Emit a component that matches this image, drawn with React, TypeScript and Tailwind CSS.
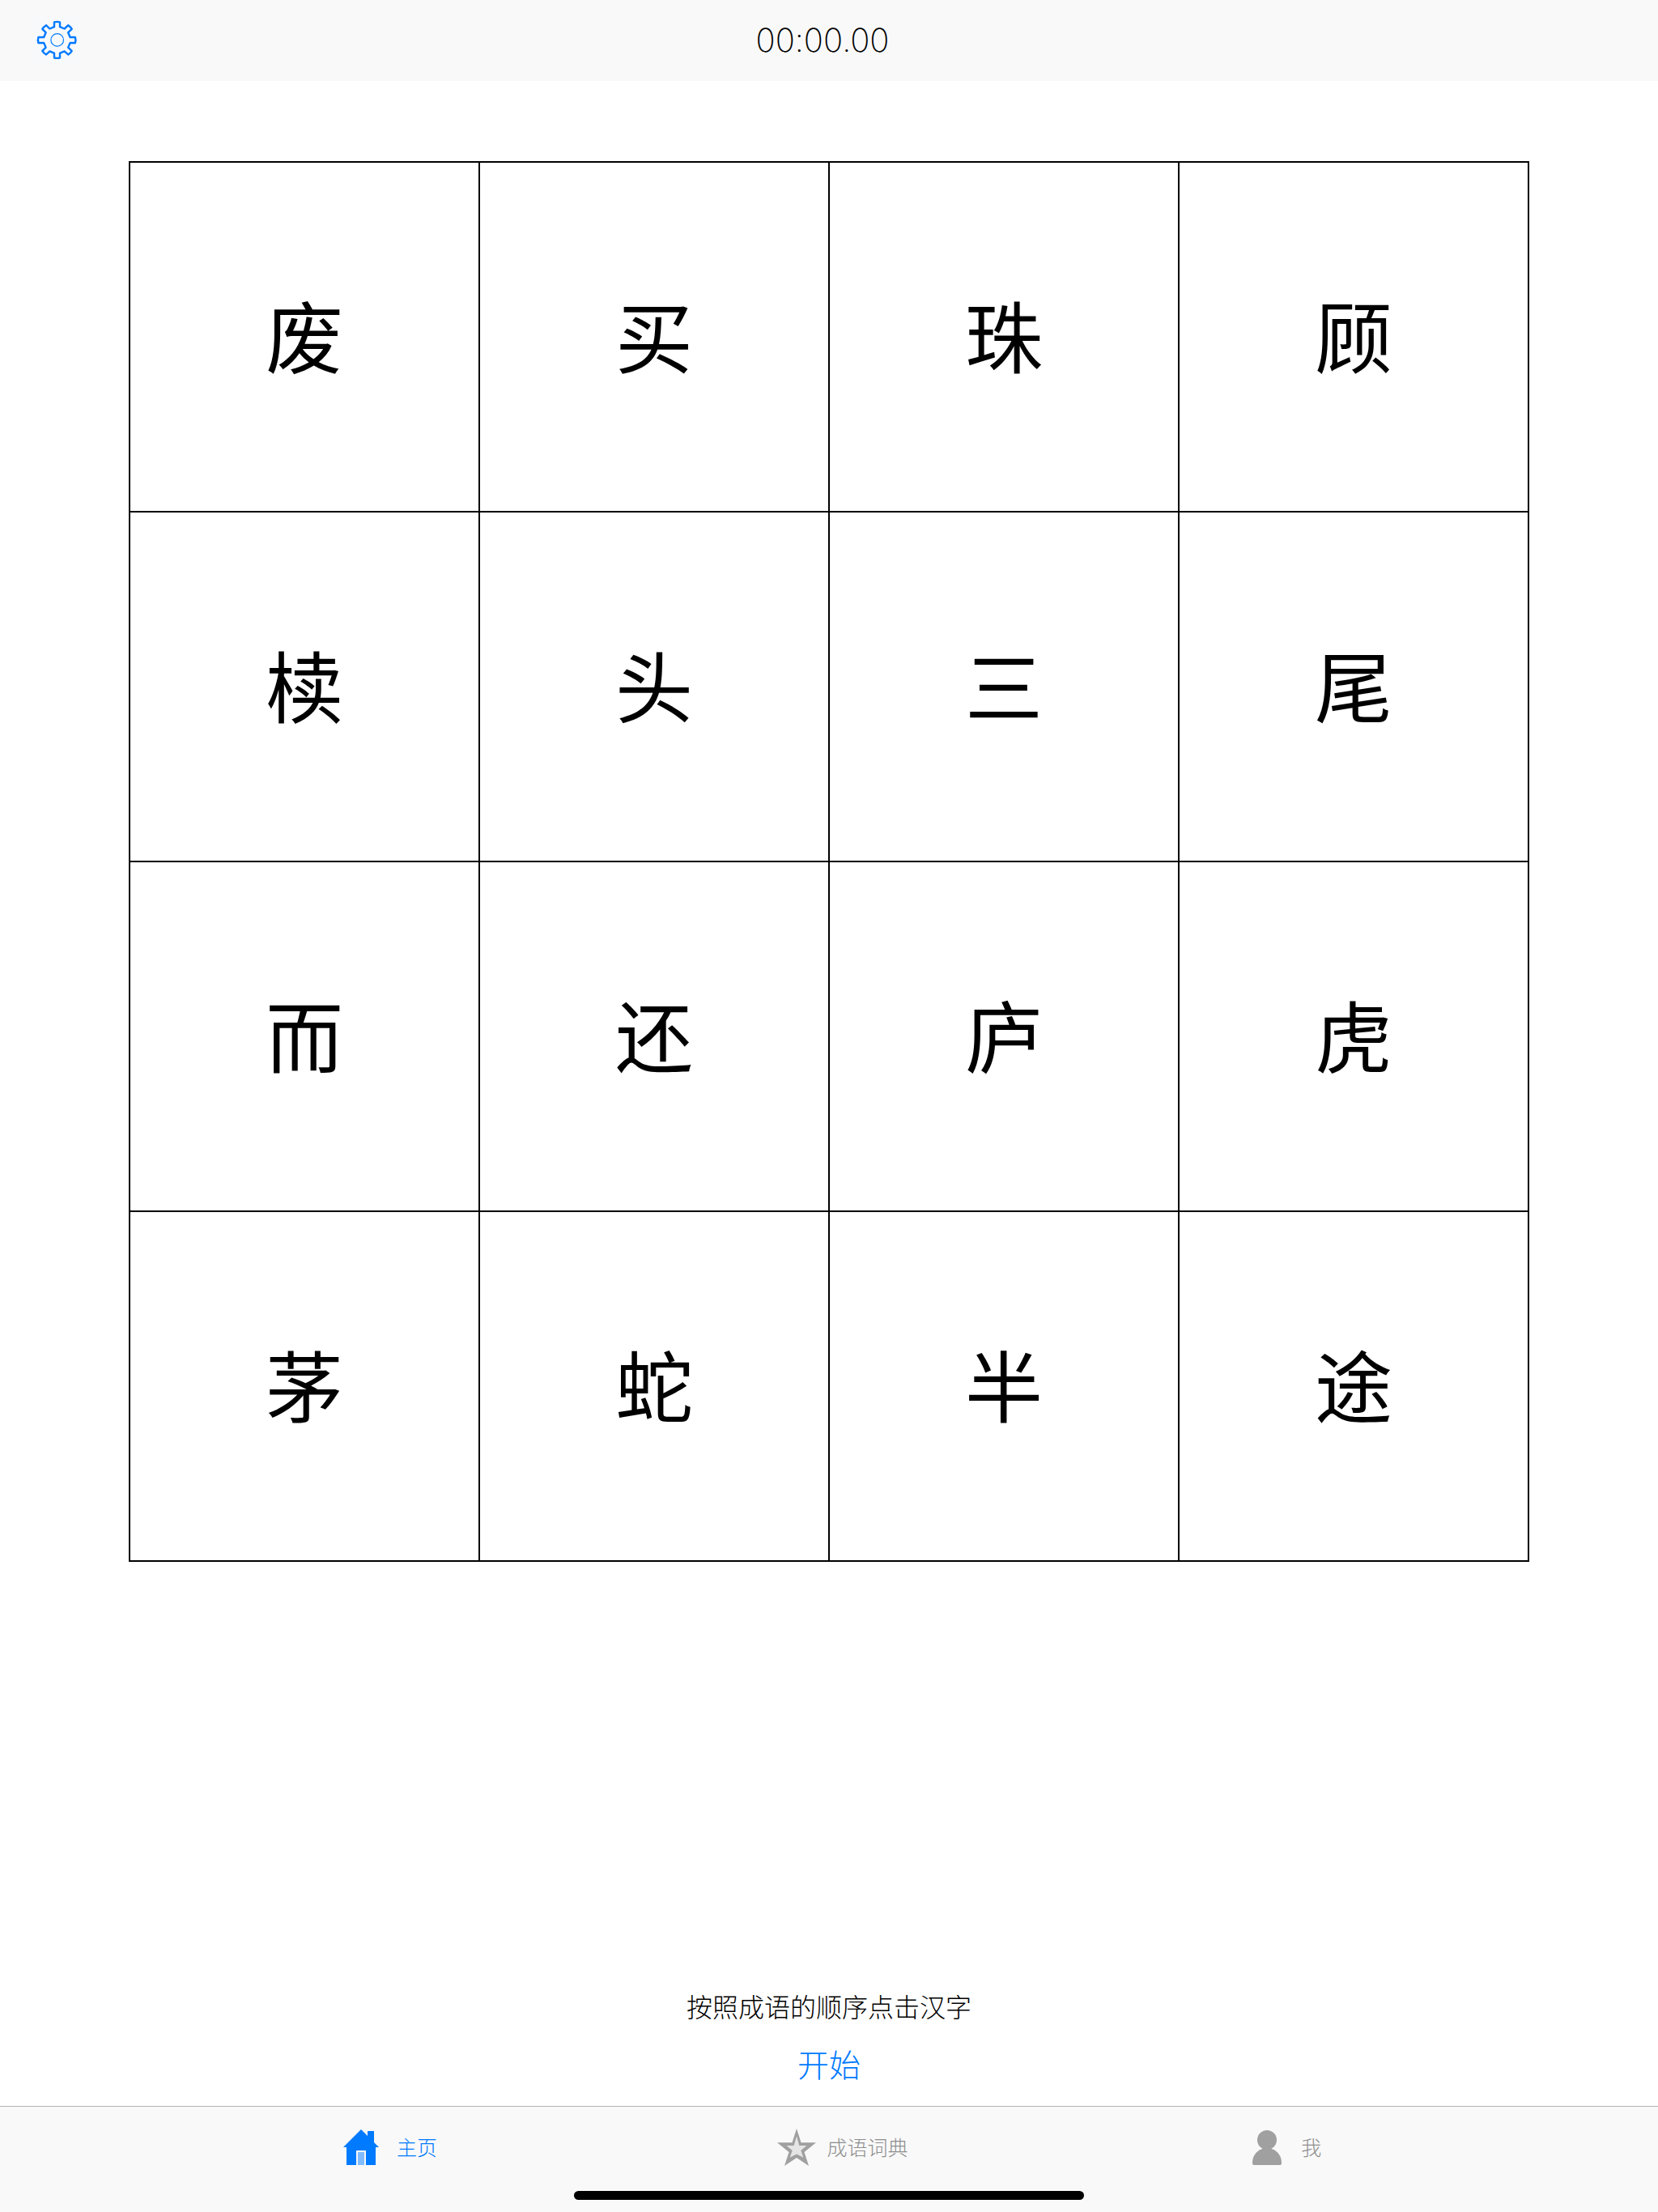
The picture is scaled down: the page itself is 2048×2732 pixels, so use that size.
import React, { useState } from "react";
import clsx from "clsx";

const CHARACTERS = [
  "废", "买", "珠", "顾",
  "椟", "头", "三", "尾",
  "而", "还", "庐", "虎",
  "茅", "蛇", "半", "途",
];

type Tab = "home" | "dictionary" | "me";

export default function App() {
  const [tab, setTab] = useState<Tab>("home");

  return (
    <div className="flex min-h-screen flex-col bg-white font-['Noto_Sans_CJK_SC',sans-serif] text-black">
      {/* TOP BAR */}
      <header className="grid h-[100px] grid-cols-[1fr_auto_1fr] items-center bg-[#f9f9f9] pr-4">
        <button
          aria-label="设置"
          className="ml-[41px] size-[59px] justify-self-start bg-[#f7f9fb]"
        >
          <GearIcon />
        </button>
        <time className="font-['Inter',sans-serif] text-[40px] leading-none font-extralight [font-feature-settings:'calt'_0]">
          00:00.00
        </time>
      </header>

      {/* BOARD */}
      <main className="flex flex-1 flex-col px-[159px] pt-[99px]">
        <div className="grid grid-cols-4 border-t-2 border-l-2 border-black">
          {CHARACTERS.map((char) => (
            <button
              key={char}
              className="flex aspect-square items-center justify-center border-r-2 border-b-2 border-black pb-2 text-8xl leading-none"
            >
              {char}
            </button>
          ))}
        </div>

        <div className="mt-auto flex flex-col items-center gap-[18px] pb-6">
          <p className="text-[32px] leading-[48px] font-light">
            按照成语的顺序点击汉字
          </p>
          <button className="text-[39px] leading-[58px] font-light text-[#007aff]">
            开始
          </button>
        </div>
      </main>

      {/* TAB BAR */}
      <footer className="flex h-[131px] flex-col gap-1 border-t border-[#b2b2b2] bg-[#f9f9f9]">
        <nav className="flex h-[100px] items-center justify-between pr-[20.3%] pl-[20.6%]">
          <TabButton label="主页" active={tab === "home"} onClick={() => setTab("home")}>
            <HomeIcon />
          </TabButton>
          <TabButton
            label="成语词典"
            active={tab === "dictionary"}
            onClick={() => setTab("dictionary")}
          >
            <StarIcon />
          </TabButton>
          <TabButton label="我" active={tab === "me"} onClick={() => setTab("me")}>
            <PersonIcon />
          </TabButton>
        </nav>
        <div className="mx-auto h-[11px] w-[30.8%] rounded-full bg-black" />
      </footer>
    </div>
  );
}

function TabButton({ label, active, onClick, children }: any) {
  return (
    <button
      onClick={onClick}
      className={clsx(
        "flex items-center text-[25px] leading-none",
        active ? "text-[#007aff]" : "text-[#8e8e8e]"
      )}
    >
      {children}
      <span className="pb-0.5 font-light">{label}</span>
    </button>
  );
}

function GearIcon() {
  return (
    <svg viewBox="0 0 59 59" className="size-full" fill="none" stroke="#007aff" strokeLinejoin="round">
      <path
        strokeWidth="2.4"
        d="M26 12.2V6.4Q29.5 5.4 33 6.4V12.2L38.6 14.5L43.3 10.2Q46 12 47.7 14.9L43.2 19.2L45.6 25H51.9Q53 28.5 51.9 32H45.6L43.2 37.6L47.7 41.9Q46 44.8 43.3 46.4L38.6 42.3L33 44.6V50.4Q29.5 51.4 26 50.4V44.6L20.4 42.3L16 46.4Q13 44.8 11.3 41.9L15.6 37.6L13.2 32H6.4Q5.3 28.5 6.4 25H13.2L15.6 19.2L11.3 14.9Q13 12 16 10.2L20.4 14.5Z"
      />
      <circle cx="29.7" cy="28.4" r="7.8" strokeWidth="1.2" />
    </svg>
  );
}

function HomeIcon() {
  return (
    <svg viewBox="0 0 68 48" className="h-12 w-[68px]" fill="currentColor">
      <path d="M24 2L32 10V4H40V18L46 24H42V46H30V28H18V46H6V24H2Z" />
      <path fill="#80bcff" d="M20 30H28V46H20Z" />
    </svg>
  );
}

function StarIcon() {
  return (
    <svg viewBox="0 0 62 48" className="h-12 w-[62px]">
      <path
        fill="#a0a0a0"
        d="M24 1L29.5 18.3H48L33.5 30L39 47L24 37L9 47L14.5 30L0 18.3H18.5Z"
      />
      <path
        fill="#e5e5e5"
        d="M24 10.3L27.3 22H36.5L29.3 28L32.3 36.8L24 32.5L15.7 36.8L18.7 28L11.5 22H20.7Z"
      />
    </svg>
  );
}

function PersonIcon() {
  return (
    <svg viewBox="0 0 66 48" className="h-12 w-[66px]" fill="#a0a0a0">
      <circle cx="24" cy="15" r="12" />
      <path d="M18 26Q24 24 30 26C38 29 42 36 42 43V44Q42 46 40 46H8Q6 46 6 44V43C6 36 10 29 18 26Z" />
    </svg>
  );
}
